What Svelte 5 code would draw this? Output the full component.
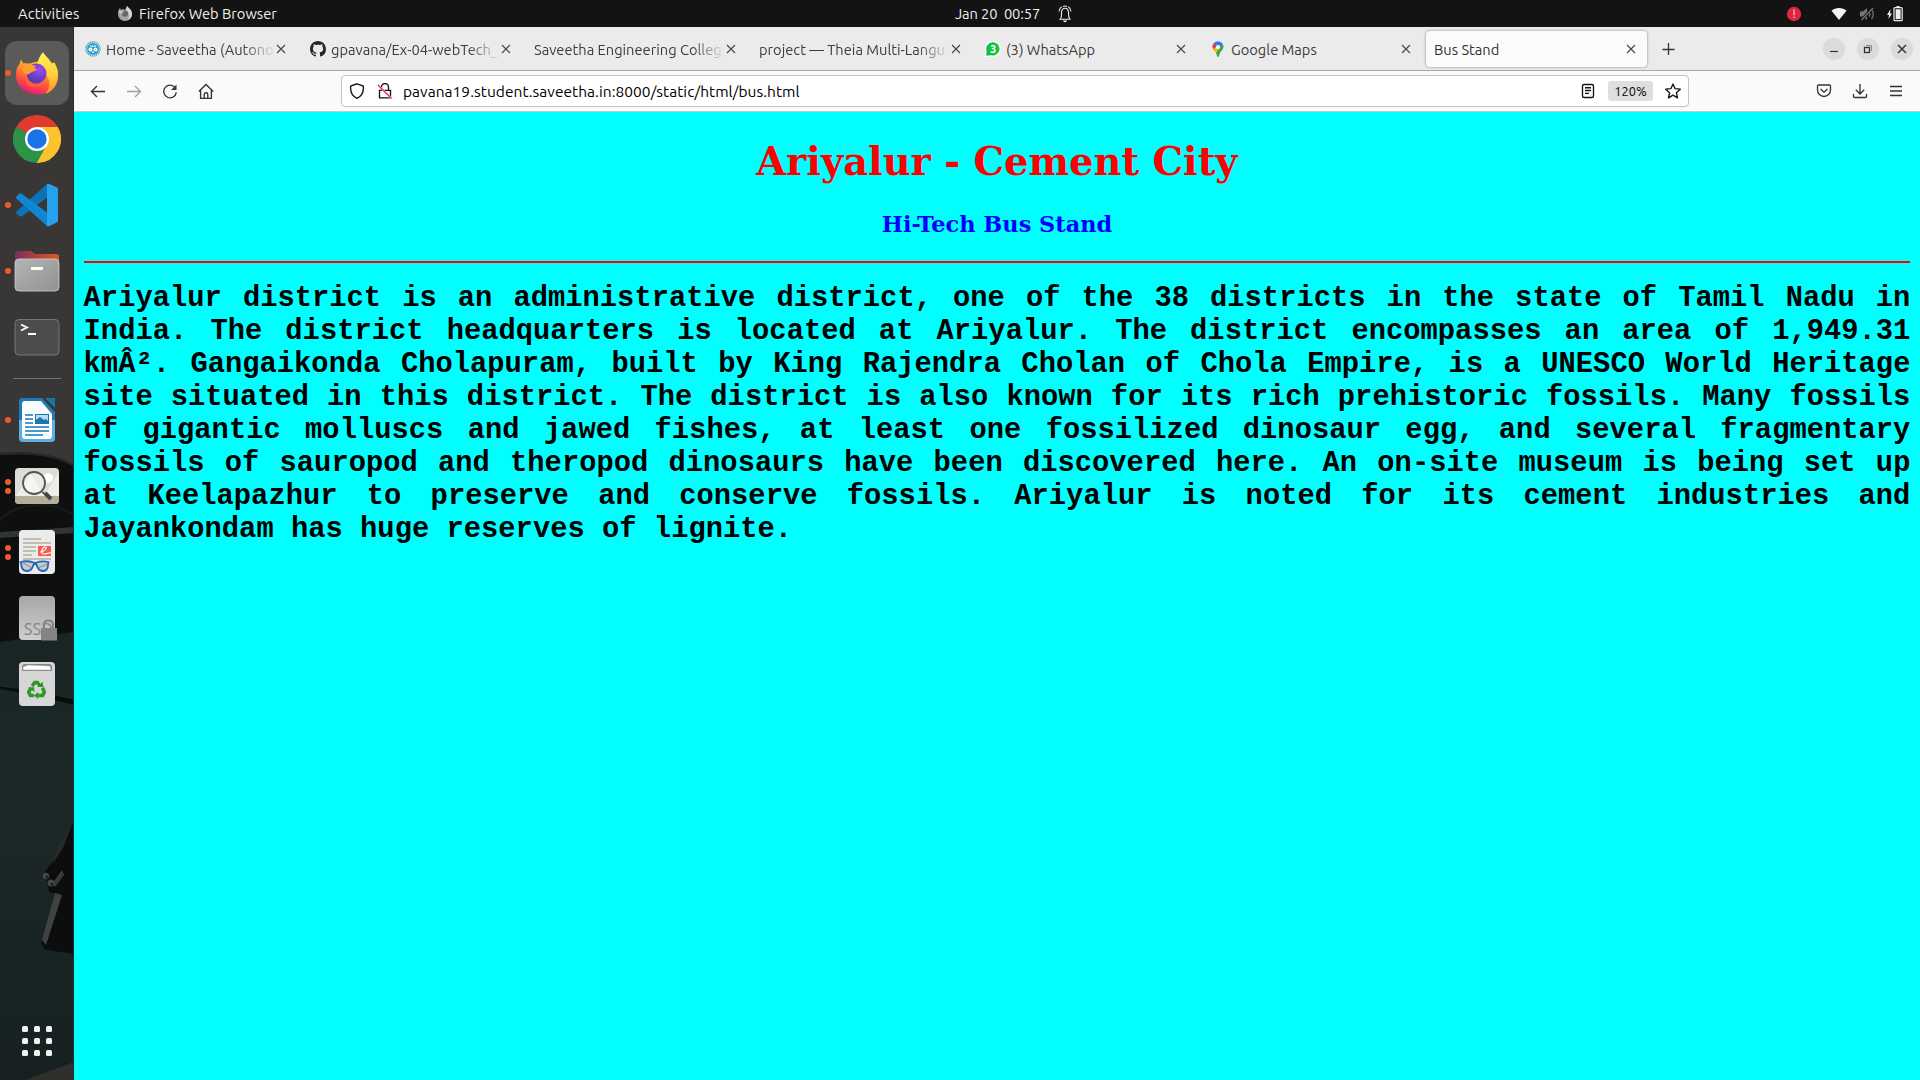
<script>
  const tabs = [
    { title: 'Home - Saveetha (Autono', icon: 'saveetha', faded: true },
    { title: 'gpavana/Ex-04-webTech_', icon: 'github', faded: true },
    { title: 'Saveetha Engineering Colleg', icon: '', faded: true },
    { title: 'project — Theia Multi-Langu', icon: '', faded: true },
    { title: '(3) WhatsApp', icon: 'whatsapp' },
    { title: 'Google Maps', icon: 'maps' },
    { title: 'Bus Stand', icon: '', active: true }
  ];
  const dock = [
    { id: 'firefox', dots: 1, active: true },
    { id: 'chrome', dots: 0 },
    { id: 'code', dots: 1 },
    { id: 'files', dots: 1 },
    { id: 'terminal', dots: 0 },
    { id: 'separator', dots: 0 },
    { id: 'writer', dots: 1 },
    { id: 'viewer', dots: 2 },
    { id: 'reader', dots: 2 },
    { id: 'ssd', dots: 0 },
    { id: 'trash', dots: 0 }
  ];
</script>

<div class="desktop">
  <header class="topbar">
    <span class="activities">Activities</span>
    <svg class="ff-small" width="16" height="16" viewBox="0 0 16 16">
      <path d="M1 7C1 5 2 3 3 2l1 2 2-1 2 1 2-4c1 2 5 3 5 8a7 7 0 0 1-14 0z" fill="#a5a5a5" />
      <path d="M10 0c1 2 5 3 5 8a7 7 0 0 1-4 6c2-4 1-7-2-9z" fill="#d5d5d5" />
      <circle cx="8" cy="7.6" r="3.2" fill="#686868" />
      <path d="M2 5l5 .5-2 2-2 0z" fill="#c8c8c8" />
    </svg>
    <span class="appname">Firefox Web Browser</span>
    <span class="clock">Jan 20&nbsp; 00:57</span>
    <svg class="bell" width="16" height="18" viewBox="0 0 16 18" fill="none" stroke="#eee" stroke-width="1.1">
      <path d="M2.2 14.3h11.6M3.6 13.8c1-1.4.9-3.5.9-6C4.500 5 5.800 3.300 8 3.300s3.500 1.700 3.500 4.500c0 2.500 0 4.600 1 6" />
      <path d="M4.700 1.700C3.100 2.700 2.200 4.400 2 6.500M11.300 1.700c1.600 1 2.500 2.700 2.700 4.800M6 1.500q2-1 4 0" />
      <path d="M6 15.500h4c-.3 1-1 1.700-2 1.700s-1.700-.7-2-1.700z" fill="#eee" stroke="none" />
    </svg>
    <div class="status">
      <svg width="16" height="16" viewBox="0 0 16 16"><circle cx="8" cy="8" r="7.200" fill="#dd263f" /><path d="M8 3.500v5.700M8 10.700v1.600" stroke="#f3a9b2" stroke-width="1.600" /></svg>
      <svg class="wifi" width="16" height="16" viewBox="0 0 16 16"><path d="M.5 4.800C4.500 1 11.500 1 15.500 4.800L8 14z" fill="#f5f5f5" /></svg>
      <svg class="mute" width="16" height="16" viewBox="0 0 16 16"><path d="M1 5.500h3L8 2v12l-4-3.500H1z" fill="#777" /><path d="M10 5.500q1.800 2.500 0 5M12.500 3q3.600 5 0 10" fill="none" stroke="#666" stroke-width="1.500" /><path d="M14 1.500L2 14.500" stroke="#151515" stroke-width="2.800" /><path d="M14 2L2.500 14" stroke="#777" stroke-width="1.200" /></svg>
      <svg class="batt" width="18" height="16" viewBox="0 0 18 16"><path d="M4.500 3L1 9h2l-.5 4L6 7.500H4z" fill="#eee" /><path d="M10.500 0h3v2h-3z" fill="#eee" /><rect x="8" y="1.700" width="8.200" height="13" rx="1" fill="none" stroke="#eee" stroke-width="1.200" /><rect x="9.600" y="3.300" width="5" height="9.800" fill="#eee" /></svg>
    </div>
  </header>

  <div class="workspace">
    <aside class="dock">
      <svg class="wallpaper" width="74" height="1053" viewBox="0 27 74 1053">
        <defs>
          <linearGradient id="teal" x1="0" y1="0" x2="0" y2="1"><stop offset="0" stop-color="#182524" /><stop offset=".35" stop-color="#1b2928" /><stop offset="1" stop-color="#162020" /></linearGradient>
        </defs>
        <path d="M0 27h74v440H0z" fill="#383735" />
        <path d="M0 455c35-3 61 3 74 12v180H0z" fill="#0e0f0f" />
        <path d="M0 454c35-3 61 3 74 12" fill="none" stroke="#252524" stroke-width="2" />
        <path d="M0 520c15-17 52-20 74-5" fill="none" stroke="#191a1a" stroke-width="2" />
        <path d="M0 532l74-5v6L0 538z" fill="#303534" />
        <path d="M0 642L74 632v448H0z" fill="url(#teal)" />
        <path d="M0 686q35 4 74 13v6Q35 695 0 689z" fill="#0a0c0c" />
        <path d="M0 686q35 4 74 13" fill="none" stroke="#242c2b" />
        <path d="M74 820l-16 33-13 19 4 20 10 2-17 46q-2 7 5 10l27 4z" fill="#0c0d0d" />
        <path d="M55 893l7 2-16 50-4-5z" fill="#404241" />
        <path d="M73 822L58 848l-7 18 12-18z" fill="#282a2a" />
        <path d="M52 884l10-14 2 5-9 12z" fill="#3a3a3a" />
        <circle cx="46" cy="876" r="3.200" fill="#484848" /><circle cx="51" cy="883" r="3.500" fill="#484848" />
        <circle cx="47" cy="877" r="1.500" fill="#222" /><circle cx="52" cy="884" r="1.500" fill="#222" />
        <path d="M26 1080L74 1062v18z" fill="#302f2c" />
        <path d="M73.500 27v1053" stroke="#292a29" />
      </svg>
      <div class="launchers">
        {#each dock as item}
          {#if item.id === 'separator'}
            <div class="separator"></div>
          {:else}
            <div class="launcher">
              <span class="dots">{#each Array(item.dots) as _}<i></i>{/each}</span>
              <div class="tile" class:active={item.active}>
                <svg width="48" height="48" viewBox="0 0 48 48">
                  {#if item.id === 'firefox'}
                    <defs>
                      <linearGradient id="ffo" x1=".75" y1="0" x2=".3" y2="1"><stop offset="0" stop-color="#ffda3c" /><stop offset=".4" stop-color="#ff922b" /><stop offset=".7" stop-color="#ff4b40" /><stop offset="1" stop-color="#e6137a" /></linearGradient>
                      <linearGradient id="ffy" x1=".5" y1="0" x2=".6" y2="1"><stop offset="0" stop-color="#fff150" /><stop offset=".55" stop-color="#ffd13c" /><stop offset="1" stop-color="#ff8b2c" /></linearGradient>
                      <radialGradient id="ffp" cx=".65" cy=".3" r=".8"><stop offset="0" stop-color="#a046f5" /><stop offset="1" stop-color="#4838a8" /></radialGradient>
                    </defs>
                    <path d="M3 26c0-7 2-9 3.500-11 .3-2 1-3 2.200-4.500.2 2 .8 3 2 4 2-.6 4 0 6 0l8-2L40 14c4 4 5 8 5 13a21 19 0 0 1-42-1z" fill="url(#ffo)" />
                    <path d="M30 3c1 3 5 5 7 9 1 1 2 2 2.500 4l1.500-3c4 6 5 13 3 20-2 7-8 11-12 12 5-5 6-12 2-18-2-3-5-4-9-5-1-8 0-13 5-19z" fill="url(#ffy)" />
                    <circle cx="23.500" cy="24.500" r="10" fill="url(#ffp)" />
                    <path d="M8 19c5-3 11-4 15-2l-2 2c1 0 3 1 3 2-3 1-6 2-8 4-3 2-5-2-8-6z" fill="#ff9b30" />
                    <path d="M14 28c2 8 11 10 17 5-4 6-13 7-18 2z" fill="#ff6a3a" opacity=".7" />
                  {:else if item.id === 'chrome'}
                    <path d="M24 24L3.200 12A24 24 0 0 1 44.800 12z" fill="#df3b30" />
                    <path d="M24 24L44.800 12A24 24 0 0 1 24 48z" fill="#fcc32d" />
                    <path d="M24 24v24A24 24 0 0 1 3.200 12z" fill="#2b9448" />
                    <path d="M24 12h20.800l-2 4-8 14z" fill="#fcc32d" /><path d="M3.200 12L13.600 30l9 6 11-6L24 48" fill="#2b9448" /><path d="M34.400 30L24 48l12-3 6-15z" fill="#fcc32d" />
                    <circle cx="24" cy="24" r="12" fill="#fff" /><circle cx="24" cy="24" r="9.700" fill="#1a73e8" />
                  {:else if item.id === 'code'}
                    <path d="M34 3L4 30c-1 1-1 2 0 3l2.500 2c1 1 2 1 3 0L36 15z" fill="#0d72b8" />
                    <path d="M9 13c-1-1-2-1-3 0L3.800 15c-1 1-1 2 0 3L34 45l2-12z" fill="#1186d2" />
                    <path d="M34 3q1-.6 3 .2l7 3.400q1 .6 1 2v31q0 1.200-1 1.700l-7 3.500q-2 1-3 .2V3z" fill="#27a0ee" />
                  {:else if item.id === 'files'}
                    <defs><linearGradient id="fold"><stop stop-color="#77305d" /><stop offset="1" stop-color="#e95420" /></linearGradient><linearGradient id="fgray" x2="1" y2="1"><stop stop-color="#b4b4b4" /><stop offset="1" stop-color="#929292" /></linearGradient></defs>
                    <path d="M2 12V7q0-3 3-3h13l4 3h21q3 0 3 3v20H2z" fill="url(#fold)" />
                    <rect x="2" y="12" width="44" height="32" rx="4" fill="url(#fgray)" stroke="#d0d0d0" stroke-width=".8" />
                    <rect x="18" y="20" width="12" height="3" rx=".7" fill="#fff" />
                  {:else if item.id === 'terminal'}
                    <rect x="2" y="6.500" width="44" height="35.500" rx="4" fill="#4c4c4c" stroke="#777" />
                    <path d="M8 11.500l6 3-6 3M15 21h8" fill="none" stroke="#fff" stroke-width="1.800" />
                  {:else if item.id === 'writer'}
                    <path d="M9 2h20l13 14v26q0 4-4 4H10q-4 0-4-4V5q0-3 3-3z" fill="#1e7bb5" />
                    <path d="M6 24h36v18q0 4-4 4H10q-4 0-4-4z" fill="#5ab0e4" />
                    <path d="M11 5h17l11 13v22q0 3-3 3H12q-3 0-3-3V8q0-3 3-3z" fill="#fafcfd" />
                    <path d="M32 2h10v10z" fill="#1675ab" />
                    <path d="M12 19h8M12 23h8M12 27h8M12 31h24M12 35h24M12 39h18" stroke="#1878b0" stroke-width="1.700" />
                    <rect x="22.500" y="18.500" width="13" height="9" fill="#b9dcf0" stroke="#1878b0" /><path d="M23 27v-3l4-3 4 3 2-1 2 2v2z" fill="#1878b0" />
                  {:else if item.id === 'viewer'}
                    <rect x="2" y="6" width="44" height="36" rx="4" fill="#ddddd5" />
                    <path d="M2 35L18 12l13 22 15-24v25z" fill="#eeeee9" /><circle cx="35" cy="16" r="5" fill="#fff" />
                    <path d="M2 34h44v4q0 4-4 4H6q-4 0-4-4z" fill="#b4ad9a" />
                    <circle cx="21" cy="21" r="11" fill="#fff" fill-opacity=".4" stroke="#555" stroke-width="1.800" />
                    <path d="M29 30l3 2" stroke="#555" stroke-width="2" /><path d="M32 31l6 6" stroke="#454545" stroke-width="4" />
                  {:else if item.id === 'reader'}
                    <rect x="6" y="2" width="36" height="44" rx="4" fill="#ebebeb" />
                    <path d="M10 11h18M10 15h28M10 19h13M10 23h13M10 27h9M10 31h28" stroke="#b7ada0" stroke-width="1.700" />
                    <rect x="25" y="18" width="13" height="10" fill="#fa5b51" /><path d="M27 24c5 0 8-5 5-5s-5 7-1 7 4-2 7-1" fill="none" stroke="#fff" stroke-width="1.200" />
                    <path d="M7.500 34c4-1 9-1 13 .5q1.500.8 3 0c4-1.500 8-1.500 12-.5l-1 6q-1 3-4.500 3T25 40l-2-4h-2l-2 4q-1.500 3-5 3t-5-3z" fill="#c6cccf" stroke="#2765b6" stroke-width="1.800" /><path d="M10 35l9 5M25 40l9-4" stroke="#858b8f" stroke-width="1" />
                  {:else if item.id === 'ssd'}
                    <defs><linearGradient id="ssd" x2="0" y2="1"><stop stop-color="#a7a7a7" /><stop offset="1" stop-color="#cecece" /></linearGradient></defs>
                    <rect x="6" y="2" width="36" height="44" rx="4" fill="url(#ssd)" />
                    <text x="10.800" y="40.500" class="ssd-label">SSD</text>
                    <path d="M31 35v-4q0-4.500 4.500-4.500T40 31v4" fill="none" stroke="#848484" stroke-width="2.200" /><rect x="28" y="34" width="16" height="12.500" fill="#848484" />
                  {:else}
                    <rect x="6" y="2" width="36" height="44" rx="4" fill="#d6d6d6" />
                    <path d="M9 11V7q0-3 3-3h24q3 0 3 3v4z" fill="#858585" /><path d="M10 10V7l5-2 22 1 1 4z" fill="#fff" stroke="#aaa" stroke-width=".6" />
                    <g transform="translate(2.600 3.400) scale(.87)"><g fill="none" stroke="#2f9625" stroke-width="4"><path d="M19 26l3-4h3l3 4M31 28l2 5-2 4h-5M21 37h-4l-2-4 3-5" /></g>
                    <g fill="#2f9625"><path d="M25 27h7l-1-6zM26 33v8l-5-4zM14 28l7-1 1 6z" /></g></g>
                  {/if}
                </svg>
              </div>
            </div>
          {/if}
        {/each}
      </div>
      <div class="apps">{#each Array(9) as _}<i></i>{/each}</div>
    </aside>

    <main class="browser">
      <nav class="tabs">
        {#each tabs as tab}
          <div class="tab" class:active={tab.active}>
            {#if tab.icon}
              <svg class="fav" width="16" height="16" viewBox="0 0 16 16">
                {#if tab.icon === 'saveetha'}
                  <circle cx="8" cy="8" r="7" fill="#e5f3f8" stroke="#5aa59a" stroke-width="1.400" stroke-dasharray="1.500 .6" />
                  <circle cx="8" cy="8" r="6" fill="#279fdc" />
                  <circle cx="5.500" cy="8.500" r="2" fill="#fff" /><circle cx="10.500" cy="8.500" r="2" fill="#fff" />
                  <path d="M5 4.500h6v1.300H5zM7 10.500h2v1.500H7z" fill="#d8eef8" /><path d="M5 8h1v1H5zM10 8h1v1h-1z" fill="#e4a04e" />
                {:else if tab.icon === 'github'}
                  <path fill="#24292f" d="M8 0C3.580 0 0 3.580 0 8c0 3.540 2.290 6.530 5.470 7.590.4.070.55-.17.55-.38 0-.19-.01-.82-.01-1.490-2.010.37-2.530-.49-2.690-.94-.09-.23-.48-.94-.82-1.130-.28-.15-.68-.52-.01-.53.63-.01 1.080.58 1.230.82.72 1.210 1.870.87 2.330.66.07-.52.28-.87.51-1.070-1.780-.2-3.640-.89-3.640-3.950 0-.87.31-1.590.82-2.150-.08-.2-.36-1.020.08-2.120 0 0 .67-.21 2.200.82.64-.18 1.320-.27 2-.27s1.360.09 2 .27c1.530-1.040 2.200-.82 2.200-.82.44 1.100.16 1.920.08 2.120.51.56.82 1.270.82 2.150 0 3.070-1.870 3.750-3.650 3.950.29.25.54.73.54 1.480 0 1.070-.01 1.930-.01 2.200 0 .21.15.46.55.38A8.010 8.010 0 0 0 16 8c0-4.420-3.580-8-8-8z" />
                {:else if tab.icon === 'whatsapp'}
                  <path d="M0 16V8a8 8 0 1 1 8 8z" fill="#fff" /><path d="M1.200 14.800L1.500 10A6.700 6.700 0 1 1 6 14.300z" fill="#14c143" />
                  <text x="8" y="11.800" class="badge">3</text>
                {:else}
                  <path d="M2.500 6A5.500 5.500 0 0 1 13.500 6z" fill="#4285f4" />
                  <path d="M3.700 2.500L8 6 4.500 10C2.500 8 1.600 4.600 3.700 2.500z" fill="#ea4335" /><path d="M3 8l5-3 1 5-2 3z" fill="#fbbc04" />
                  <path d="M12.500 3c2.500 4-1 6-2.500 9-.6 1.300-1 4-2 4s-1-2-2-4z" fill="#34a853" /><path d="M3.800 2.500A5.500 5.500 0 0 1 12.500 3L8 6z" fill="#2e79ed" /><circle cx="8" cy="6" r="2" fill="#fff" />
                {/if}
              </svg>
            {/if}
            <span class="title" class:faded={tab.faded}>{tab.title}</span>
            <svg class="x" width="10" height="10" viewBox="0 0 10 10"><path d="M1 1l8 8M9 1L1 9" stroke="#444" stroke-width="1.100" /></svg>
          </div>
        {/each}
        <svg class="plus" width="14" height="14" viewBox="0 0 14 14"><path d="M7.500 1v12M1.500 7.500h12" stroke="#333" stroke-width="1.300" /></svg>
        <div class="controls">
          <span><svg width="12" height="12" viewBox="0 0 12 12"><path d="M2 8.500h8" stroke="#333" stroke-width="1.200" /></svg></span>
          <span><svg width="12" height="12" viewBox="0 0 12 12" fill="none"><path d="M4 2.500h5.500V8" stroke="#888" /><rect x="2.500" y="4.500" width="5" height="5" stroke="#333" stroke-width="1.300" /></svg></span>
          <span><svg width="12" height="12" viewBox="0 0 12 12"><path d="M2 2l8 8M10 2l-8 8" stroke="#333" stroke-width="1.500" /></svg></span>
        </div>
      </nav>

      <div class="toolbar">
        <div class="nav">
          <svg width="16" height="16" viewBox="0 0 16 16"><path d="M15 8.500H1.700M7 3L1.500 8.500 7 14" /></svg>
          <svg class="dim" width="16" height="16" viewBox="0 0 16 16"><path d="M1 8.500h13.300M9 3l5.500 5.500L9 14" /></svg>
          <svg width="16" height="16" viewBox="0 0 16 16"><path d="M13.300 5A6.300 6.300 0 1 0 14.300 9.300" /><path d="M14.500 1.500V7H9z" fill="#3c3c3c" stroke="none" /></svg>
          <svg width="16" height="16" viewBox="0 0 16 16"><path d="M.8 8.500L8 1.500l7.200 7M2.600 7v8.300h10.800V7M6.200 15v-3.500q0-1.800 1.800-1.800t1.800 1.800V15" /></svg>
        </div>
        <div class="urlbar">
          <svg width="16" height="16" viewBox="0 0 16 16"><path d="M8 .8L14.300 3c.5 5-1.300 10-6.300 12.300C3 13 1.200 8 1.700 3z" /></svg>
          <svg class="lock" width="16" height="16" viewBox="0 0 16 16"><path d="M4.500 7V4a3.500 3.500 0 0 1 7 0v3M2.500 7.300h11v7.500h-11z" /><path d="M1 2l13.500 13.500" stroke="#fff" stroke-width="2" /><path d="M1 2l13.500 13.500" class="slash" /></svg>
          <span class="url">pavana19.student.saveetha.in:8000/static/html/bus.html</span>
          <svg class="book" width="16" height="16" viewBox="0 0 16 16"><rect x="2.500" y="1.500" width="11" height="13" rx="1.500" /><path d="M5 4.700h6M5 7.500h6M5 10.300h4" /></svg>
          <span class="zoom">120%</span>
          <svg width="16" height="16" viewBox="0 0 16 16"><path d="M8 1l2.100 4.700 5.200.5-3.900 3.500 1.100 5.100L8 12.200l-4.500 2.600 1.100-5.100L.7 6.200l5.200-.5z" stroke-linejoin="round" /></svg>
        </div>
        <div class="tools">
          <svg width="16" height="16" viewBox="0 0 16 16"><path d="M1.500 3q0-1 1-1h11q1 0 1 1v4a6.500 6.500 0 0 1-13 0zM4.500 6L8 9.200 11.500 6" /></svg>
          <svg width="16" height="16" viewBox="0 0 16 16"><path d="M8 1v9.500M3.800 6.800L8 11l4.200-4.200M1.500 11v2.500q0 1 1 1h11q1 0 1-1V11" /></svg>
          <svg width="16" height="16" viewBox="0 0 16 16"><path d="M2 3.500h12M2 8h12M2 12.500h12" /></svg>
        </div>
      </div>

      <article class="page">
        <h1>Ariyalur - Cement City</h1>
        <h3>Hi-Tech Bus Stand</h3>
        <hr />
        <p>Ariyalur district is an administrative district, one of the 38 districts in the state of Tamil Nadu in India. The district headquarters is located at Ariyalur. The district encompasses an area of 1,949.31 kmÂ². Gangaikonda Cholapuram, built by King Rajendra Cholan of Chola Empire, is a UNESCO World Heritage site situated in this district. The district is also known for its rich prehistoric fossils. Many fossils of gigantic molluscs and jawed fishes, at least one fossilized dinosaur egg, and several fragmentary fossils of sauropod and theropod dinosaurs have been discovered here. An on-site museum is being set up at Keelapazhur to preserve and conserve fossils. Ariyalur is noted for its cement industries and Jayankondam has huge reserves of lignite.</p>
      </article>
    </main>
  </div>
</div>

<style>
  :global(body) { margin: 0; overflow: hidden; }
  .desktop { width: 1920px; height: 1080px; display: flex; flex-direction: column; font-family: Ubuntu, "Noto Sans", sans-serif; font-size: 14.670px; overflow: hidden; }
  svg { display: block; flex: none; }
  .topbar { height: 27px; flex: none; background: #131313; color: #efefef; display: flex; align-items: center; box-sizing: border-box; padding-left: 18px; white-space: nowrap; line-height: 28px; }
  .activities { width: 99px; letter-spacing: .15px; }
  .ff-small { margin-right: 6px; }
  .appname { width: 816px; }
  .clock { width: 102px; letter-spacing: -.1px; }
  .status { margin-left: auto; display: flex; align-items: center; padding-right: 16px; }
  .wifi { margin-left: 29px; }
  .mute { margin-left: 12px; }
  .batt { margin-left: 11px; }
  .workspace { display: flex; flex: 1; min-height: 0; }
  .dock { width: 74px; flex: none; position: relative; display: flex; flex-direction: column; justify-content: space-between; box-sizing: border-box; padding: 14px 0 24px; }
  .wallpaper { position: absolute; left: 0; top: 0; }
  .launchers { position: relative; display: flex; flex-direction: column; gap: 2px; }
  .launcher { display: flex; height: 64px; align-items: center; }
  .tile { width: 64px; height: 64px; margin-left: 5px; border-radius: 12px; display: flex; align-items: center; justify-content: center; flex: none; }
  .tile.active { background: #5a5a58; }
  .dots { width: 6px; margin: 0 -11px 0 5px; z-index: 1; display: flex; flex-direction: column; gap: 3px; }
  .dots i { width: 6px; height: 6px; border-radius: 50%; background: #ed5b28; }
  .separator { height: 1px; width: 48px; margin: 7px 13px 7px; background: #72716f; }
  .ssd-label { font: 16px "Open Sans", "Noto Sans", sans-serif; fill: #858585; }
  .apps { position: relative; align-self: center; display: grid; grid-template-columns: repeat(3, 6px); gap: 6px; }
  .apps i { width: 6px; height: 6px; border-radius: 1.500px; background: #f1f1ee; }
  .browser { flex: 1; min-width: 0; display: flex; flex-direction: column; background: #00ffff; }
  .tabs { height: 44px; box-sizing: border-box; border-bottom: 1px solid #a9a9a9; background: #ebebeb; display: flex; align-items: center; flex: none; padding-top: 1px; }
  .tab { width: 221px; height: 36px; margin: 0 2px; box-sizing: border-box; padding: 0 11px 0 8px; display: flex; align-items: center; color: #3c3c3c; border-radius: 4px; flex: none; }
  .tab.active { background: #fbfbfb; box-shadow: 0 0 3px #888; color: #333; }
  .fav { margin: 0 5px 0 1px; }
  .title { flex: 1; min-width: 0; white-space: nowrap; line-height: 22px; margin-right: 1px; padding-top: 2px; }
  .title.faded { mask-image: linear-gradient(to right, #000 calc(100% - 32px), transparent); }
  .badge { font: bold 10px "Noto Sans", sans-serif; fill: #fff; text-anchor: middle; }
  .plus { margin-left: 12px; }
  .controls { margin-left: auto; display: flex; gap: 12px; padding-right: 7px; }
  .controls span { width: 22px; height: 22px; border-radius: 50%; background: #dbdbdb; display: flex; align-items: center; justify-content: center; }
  .toolbar { height: 41px; flex: none; box-sizing: border-box; border-bottom: 1px solid #c9c9c9; background: #fafafa; display: flex; align-items: center; }
  .toolbar svg { fill: none; stroke: #333; stroke-width: 1.350; }
  .nav { display: flex; gap: 20px; margin-left: 16px; width: 251px; }
  .toolbar .dim { opacity: .45; }
  .urlbar { width: 1348px; height: 32px; box-sizing: border-box; border: 1px solid #c2c2c2; border-radius: 4px; background: #fff; display: flex; align-items: center; padding: 0 7px; }
  .urlbar svg { stroke: #151515; }
  .urlbar .lock { margin: 0 10px 0 12px; }
  .lock .slash { stroke: #e8284c; }
  .url { flex: 1; color: #000; white-space: nowrap; font-size: 15.500px; letter-spacing: .04px; padding-top: 1px; }
  .zoom { margin: 0 12px; width: 45px; height: 20px; border-radius: 3px; background: #dedede; color: #000; font-size: 12.800px; line-height: 21px; text-align: center; }
  .tools { margin-left: auto; display: flex; gap: 20px; padding-right: 16px; }
  .page { padding: 0 9.600px; text-align: center; }
  h1 { font: bold 38.400px/45px "DejaVu Serif", serif; color: #f00; margin: 27px 0 0; }
  h3 { font: bold 22.460px/26px "DejaVu Serif", serif; color: #00f; margin: 27px 0 0; }
  hr { border: 0; height: 2px; background: #f00; margin: 24px 0 0; }
  p { font: bold 28.800px/33px "Liberation Mono", monospace; color: #000; margin: 19px 0 0; text-align: justify; }
</style>
